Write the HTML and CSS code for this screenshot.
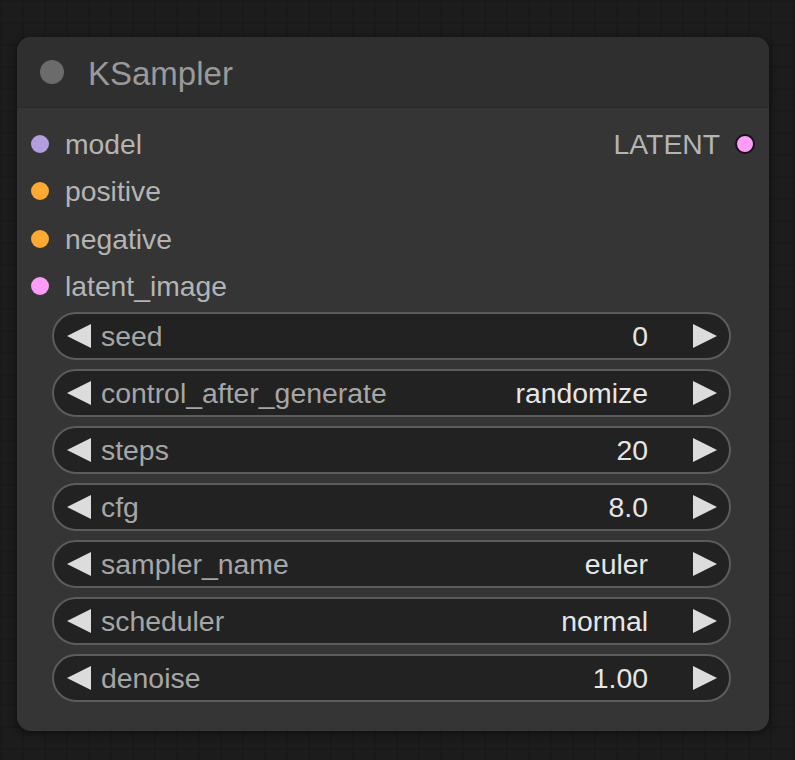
FILE: index.html
```html
<!DOCTYPE html>
<html>
<head>
<meta charset="utf-8">
<link rel="stylesheet" href="styles.css">
</head>
<body>
<div class="canvas">
  <div class="node">
    <div class="title">
      <span class="title-dot"></span>
      <span class="title-text">KSampler</span>
    </div>
    <div class="body">
      <div class="slots">
        <div class="slot-row">
          <div class="slot"><span class="dot purple"></span><span class="slot-label">model</span></div>
          <div class="slot out"><span class="slot-label">LATENT</span><span class="dot pink ring"></span></div>
        </div>
        <div class="slot-row">
          <div class="slot"><span class="dot orange"></span><span class="slot-label">positive</span></div>
        </div>
        <div class="slot-row">
          <div class="slot"><span class="dot orange"></span><span class="slot-label">negative</span></div>
        </div>
        <div class="slot-row">
          <div class="slot"><span class="dot pink"></span><span class="slot-label">latent_image</span></div>
        </div>
      </div>
      <div class="widgets">
        <div class="widget"><span class="arrow left"></span><span class="w-label">seed</span><span class="w-value">0</span><span class="arrow right"></span></div>
        <div class="widget"><span class="arrow left"></span><span class="w-label">control_after_generate</span><span class="w-value">randomize</span><span class="arrow right"></span></div>
        <div class="widget"><span class="arrow left"></span><span class="w-label">steps</span><span class="w-value">20</span><span class="arrow right"></span></div>
        <div class="widget"><span class="arrow left"></span><span class="w-label">cfg</span><span class="w-value">8.0</span><span class="arrow right"></span></div>
        <div class="widget"><span class="arrow left"></span><span class="w-label">sampler_name</span><span class="w-value">euler</span><span class="arrow right"></span></div>
        <div class="widget"><span class="arrow left"></span><span class="w-label">scheduler</span><span class="w-value">normal</span><span class="arrow right"></span></div>
        <div class="widget"><span class="arrow left"></span><span class="w-label">denoise</span><span class="w-value">1.00</span><span class="arrow right"></span></div>
      </div>
    </div>
  </div>
</div>
</body>
</html>
```
FILE: styles.css
```css
html, body {
  margin: 0;
  padding: 0;
}
body {
  width: 795px;
  height: 760px;
  overflow: hidden;
  background-color: #1c1c1c;
  background-image:
    repeating-linear-gradient(to right, #191919 0 2px, transparent 2px 22px),
    repeating-linear-gradient(to bottom, #191919 0 2px, transparent 2px 22px);
  font-family: "Liberation Sans", Arial, sans-serif;
}
.canvas {
  padding: 37px 0 0 17px;
}
.node {
  width: 752px;
  height: 694px;
  background: #353535;
  border-radius: 14px;
  overflow: hidden;
  box-shadow: 0 2px 8px rgba(0,0,0,0.5);
  display: flex;
  flex-direction: column;
}
.title {
  height: 70px;
  background: #2f2f2f;
  border-bottom: 1px solid #2a2a2a;
  display: flex;
  align-items: center;
  padding-left: 23px;
}
.title-dot {
  width: 24px;
  height: 24px;
  border-radius: 50%;
  background: #6b6b6b;
  flex: none;
}
.title-text {
  margin-left: 24px;
  font-size: 33px;
  color: #9a9a9a;
  line-height: 1;
  margin-top: 2px;
}
.body {
  display: flex;
  flex-direction: column;
  padding-top: 12px;
}
.slot-row {
  height: 47.5px;
  display: flex;
  align-items: center;
  justify-content: space-between;
  padding: 0 14px 0 14px;
}
.slot {
  display: flex;
  align-items: center;
}
.dot {
  width: 18px;
  height: 18px;
  border-radius: 50%;
  flex: none;
  box-sizing: border-box;
}
.purple { background: #b59ee0; }
.orange { background: #ffa931; }
.pink { background: #ff9cf9; }
.ring { border: 2px solid #1a0f1a; width: 20px; height: 20px; }
.slot-label {
  font-size: 28.3px;
  color: #b4b4b4;
  line-height: 1;
  margin-left: 16px;
}
.out .slot-label {
  margin-left: 0;
  margin-right: 15px;
}
.widgets {
  display: flex;
  flex-direction: column;
  gap: 9px;
  padding: 2px 38px 0 35px;
}
.widget {
  height: 48px;
  box-sizing: border-box;
  border: 2px solid #5c5c5c;
  border-radius: 24px;
  background: #222222;
  display: flex;
  align-items: center;
  padding: 0 12px 0 13px;
}
.arrow {
  width: 0;
  height: 0;
  border-top: 12px solid transparent;
  border-bottom: 12px solid transparent;
  flex: none;
}
.arrow.left {
  border-right: 24px solid #dcdcdc;
}
.arrow.right {
  border-left: 24px solid #dcdcdc;
  margin-left: 45px;
}
.w-label {
  font-size: 28.4px;
  color: #a6a6a6;
  margin-left: 10px;
  flex: 1;
  line-height: 1;
  padding-top: 1px;
}
.w-value {
  font-size: 28.4px;
  color: #e6e6e6;
  line-height: 1;
  padding-top: 1px;
}
```
